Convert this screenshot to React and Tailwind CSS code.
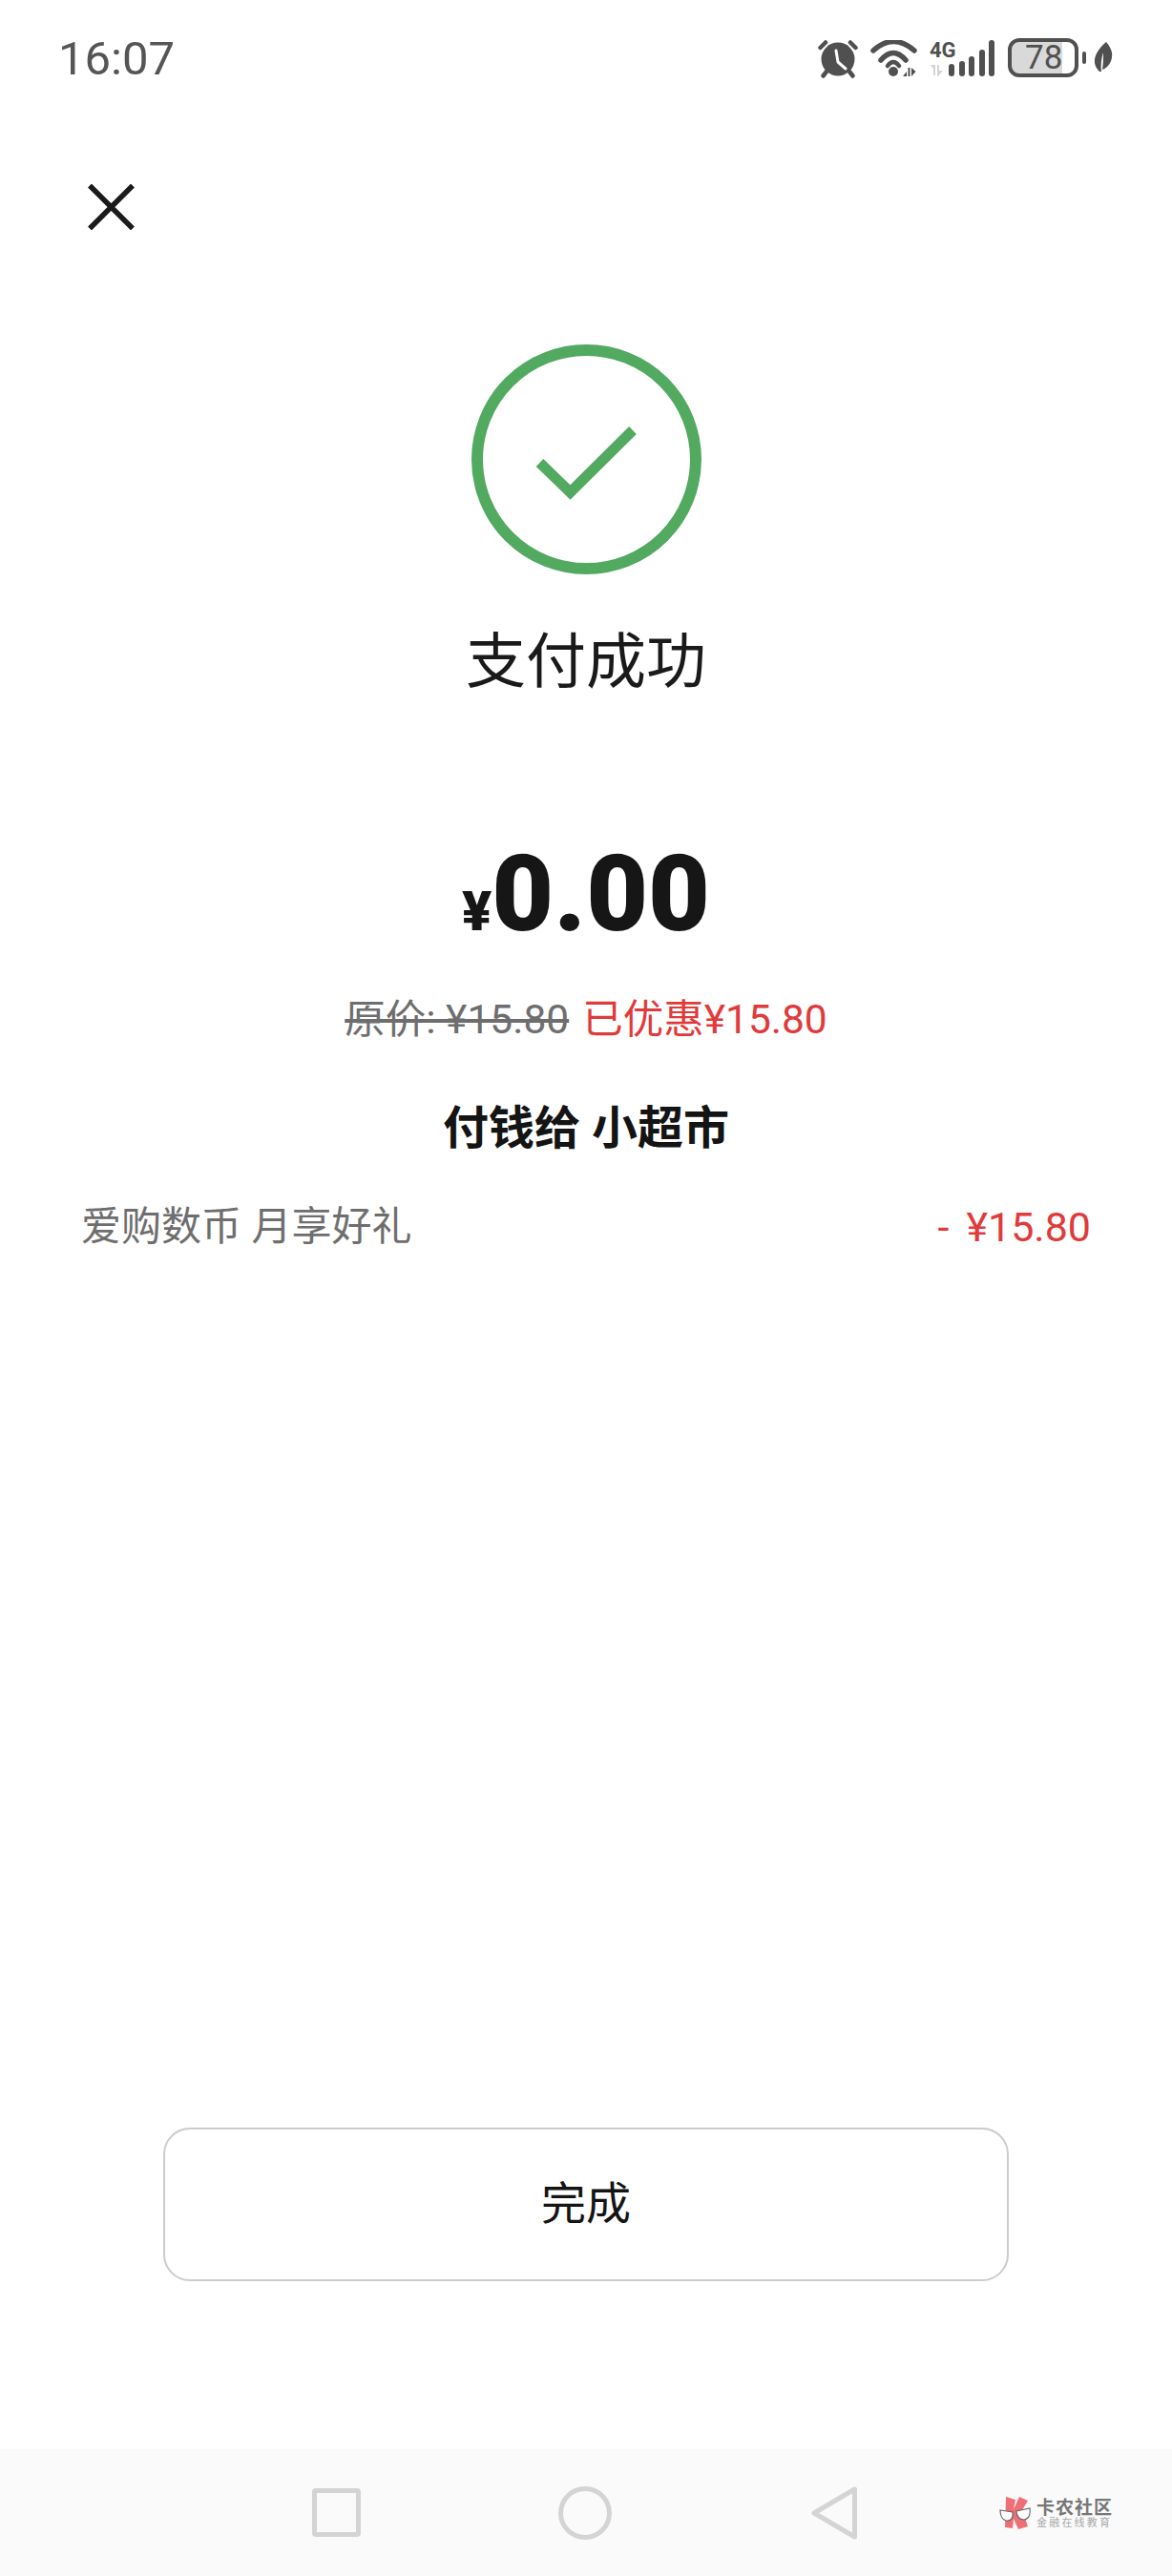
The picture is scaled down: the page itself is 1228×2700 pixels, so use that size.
import React from 'react';

const FONT = "font-['Roboto','Noto_Sans_CJK_SC',sans-serif]";

const AlarmIcon = () => (
  <svg width="42" height="40" viewBox="0 0 42 40" fill="none">
    <circle cx="21" cy="20" r="17.5" fill="#505050" />
    <path d="M2.5 8 L8 2.5 M34 2.5 L39.5 8 M9 33 L5.5 37.5 M33 33 L36.5 37.5" stroke="#505050" strokeWidth="4.5" strokeLinecap="round" />
    <path d="M19 11 L21 23 L29 30" stroke="#fff" strokeWidth="3" strokeLinecap="round" strokeLinejoin="round" />
  </svg>
);

const WifiIcon = () => (
  <svg width="50" height="40" viewBox="0 0 50 40" fill="none">
    <g stroke="#505050" strokeWidth="5.5" strokeLinecap="round">
      <path d="M3 11 Q24 -8 46 11" />
      <path d="M11 21 Q24 6 37 21" />
      <path d="M18 27 Q24 19 30 27" strokeWidth="4.5" />
    </g>
    <circle cx="24" cy="33" r="5" fill="#505050" />
    <path d="M38 33 L38 38 L34 38 Z M39.5 29 L39.5 38 L41.5 38 L41.5 29 Z M43 29 L43 38 L47.5 33 Z" fill="#505050" />
  </svg>
);

const SignalIcon = () => (
  <svg className="overflow-visible" width="70" height="40" viewBox="0 0 70 40" fill="none">
    <text x="1" y="18" fontFamily="Roboto, sans-serif" fontSize="22" fontWeight="700" fill="#505050">4G</text>
    <path d="M2 26 L7 26 L7 37 L5 37 L5 30 Z M9 26 L11 26 L11 32 L15 32 L10 38 L9 38 Z" fill="#d4d4d4" />
    <g stroke="#505050" strokeWidth="6" strokeLinecap="round">
      <path d="M24 28 L24 35" />
      <path d="M35 25 L35 35" />
      <path d="M45 20 L45 35" />
      <path d="M56 13 L56 35" />
      <path d="M66 3 L66 35" />
    </g>
  </svg>
);

const LeafIcon = () => (
  <svg width="20" height="32" viewBox="0 0 20 32" fill="#505050">
    <path d="M13 0 C6 6 0 14 1 22 C1.5 26 4 29 6 31 L8 31 C7 24 8 17 10 11 C10 17 10 22 9 29 C17 26 20 18 19 11 C18 7 16 3 13 0 Z" />
  </svg>
);

const Battery = () => (
  <div className="flex items-center">
    <div className="w-[74px] h-[41px] rounded-[12px] border-[4px] border-[#505050] bg-[linear-gradient(90deg,#d9d9d9_80%,transparent_80%)] flex items-center pl-[14px]">
      <span className={`${FONT} text-[35px] leading-none text-[#505050]`}>78</span>
    </div>
    <div className="w-[4px] h-[13px] ml-[4px] rounded-[2px] bg-[#505050]" />
  </div>
);

const StatusBar = () => (
  <div className="h-[122px] flex justify-between items-start pt-[40px] pl-[61px] pr-[62px]">
    <span className={`${FONT} text-[49px] leading-[43px] text-[#555555]`}>16:07</span>
    <div className="flex items-start">
      <div className="mt-[2px]"><AlarmIcon /></div>
      <div className="ml-[13px] mt-[2px]"><WifiIcon /></div>
      <div className="ml-[11px] mt-[2px]"><SignalIcon /></div>
      <div className="ml-[13px]"><Battery /></div>
      <div className="ml-[8px] mt-[4px]"><LeafIcon /></div>
    </div>
  </div>
);

const SuccessIcon = () => (
  <svg className="mx-auto" width="241" height="241" viewBox="0 0 241 241" fill="none">
    <circle cx="120.5" cy="120.5" r="114.5" stroke="#52a960" strokeWidth="12" />
    <path d="M71.5 124 L103.5 155 L169 90" stroke="#52a960" strokeWidth="11" />
  </svg>
);

const KaNongLogo = () => (
  <div className="flex items-center">
    <svg width="38" height="36" viewBox="0 0 38 36" fill="none">
      <path d="M7 1 L17 4 L15 14 L21 1 L30 5 L24 15 L30 32 L20 35 L15 24 L14 34 L6 33 Z" fill="#ee7076" />
      <path d="M1 15 L14 17 C15 23 12 27 7 26 C3 25 1 20 1 15 Z" fill="#fff" stroke="#666" strokeWidth="1.2" />
      <path d="M18 16 L32 13 C33 19 31 24 26 25 C21 25 18 21 18 16 Z" fill="#fff" stroke="#666" strokeWidth="1.2" />
    </svg>
    <div className="ml-[1px] w-[79px] flex flex-col">
      <span className="font-['Noto_Sans_CJK_SC',sans-serif] text-[19px] leading-[20px] font-bold tracking-[1px] text-[#777777] whitespace-nowrap">卡农社区</span>
      <span className="font-['Noto_Sans_CJK_SC',sans-serif] text-[11px] leading-[13px] tracking-[2.2px] text-[#a8a8a8] whitespace-nowrap">金融在线教育</span>
    </div>
  </div>
);

const NavBar = () => (
  <div className="h-[133px] bg-[#fafafa] flex items-center pl-[327px]">
    <div className="w-[51px] h-[51px] rounded-[4px] border-[5px] border-[#d4d4d4]" />
    <div className="ml-[207px] w-[56px] h-[56px] rounded-full border-[5px] border-[#d4d4d4]" />
    <svg className="ml-[209px]" width="48" height="56" viewBox="0 0 48 56" fill="none">
      <path d="M45.5 3 L45.5 53 L3 28 Z" stroke="#d4d4d4" strokeWidth="5" strokeLinejoin="round" />
    </svg>
    <div className="ml-[149px]"><KaNongLogo /></div>
  </div>
);

export default function App() {
  return (
    <div className={`${FONT} w-[1228px] h-[2700px] bg-white flex flex-col`}>
      <StatusBar />

      {/* close */}
      <button className="ml-[92px] mt-[71px] w-[49px] h-[48px]">
        <svg width="49" height="48" viewBox="0 0 49 48" fill="none">
          <path d="M2 1.5 L47 46.5 M47 1.5 L2 46.5" stroke="#1a1a1a" strokeWidth="5.5" />
        </svg>
      </button>

      <div className="mt-[120px]"><SuccessIcon /></div>

      <h1 className="mt-[61px] text-center text-[63px] leading-[62px] font-normal text-[#1a1a1a]">支付成功</h1>

      {/* amount */}
      <div className="mt-[167px] flex justify-center items-baseline text-[#161616] h-[90px] leading-[90px]">
        <span className="text-[58px] font-black">¥</span>
        <span className="text-[112px] font-black">0.00</span>
      </div>

      <div className="mt-[63px] flex justify-center text-[42.5px] leading-[48px]">
        <span className="line-through text-[#6e6e6e]">原价: ¥15.80</span>
        <span className="ml-[14px] text-[#e03a3a]">已优惠¥15.80</span>
      </div>

      <div className="mt-[62px] text-center text-[48px] leading-[56px] font-bold text-[#141414]">付钱给 小超市</div>

      <div className="mt-[51px] pl-[85px] pr-[85px] flex justify-between text-[42px] leading-[48px]">
        <span className="text-[#6e6e6e]">爱购数币 月享好礼</span>
        <span className="text-[43px] text-[#e03a3a]"><span className="mr-[18px]">-</span>¥15.80</span>
      </div>

      <button className="mt-auto mb-[176px] mx-auto w-[886px] h-[161px] rounded-[28px] border-2 border-[#cccccc] bg-white text-[47px] text-[#141414]">
        完成
      </button>

      <NavBar />
    </div>
  );
}
